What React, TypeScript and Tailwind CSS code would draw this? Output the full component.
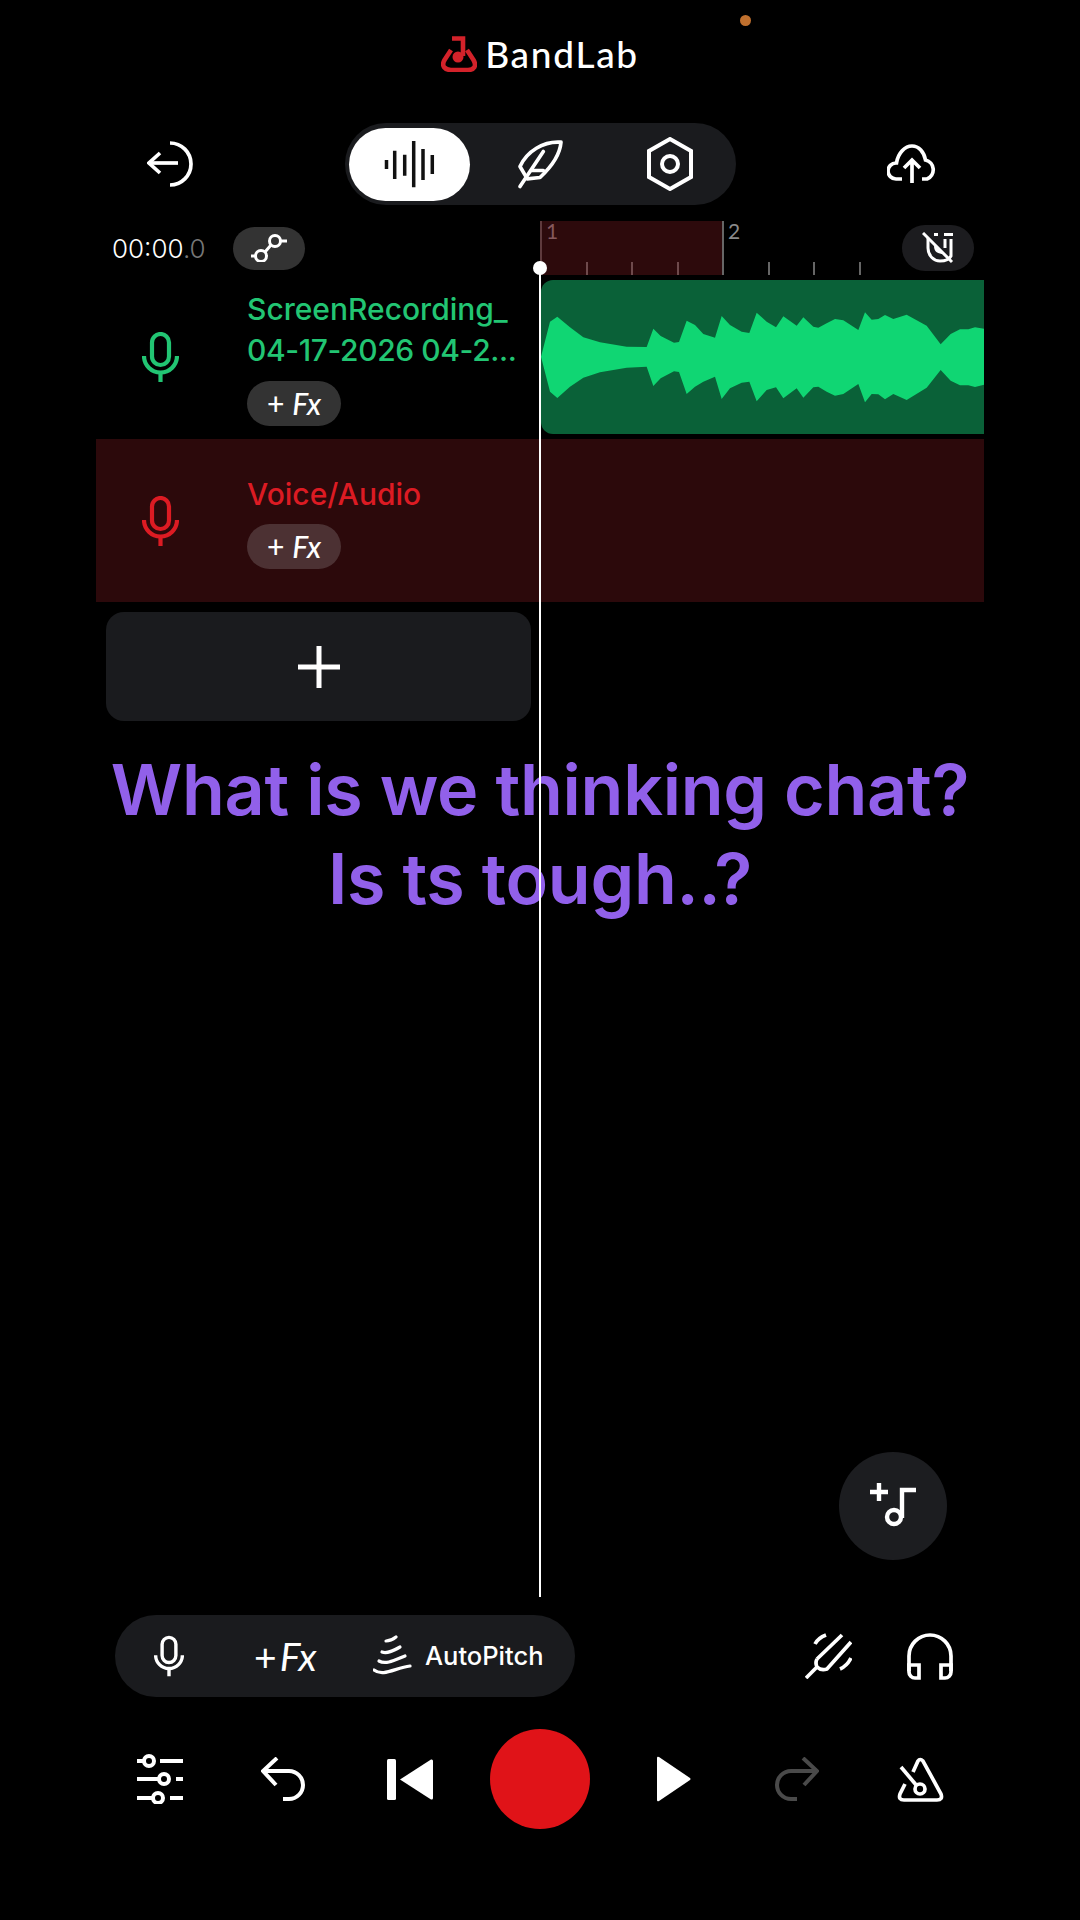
const wavePoints =
  "33,440 60,335 82,320 120,352 160,382 210,397 290,410 350,411 370,356 392,378 432,398 447,396 470,332 495,345 520,372 555,383 575,318 600,345 635,365 658,369 680,308 710,335 738,352 760,319 800,347 820,322 850,350 865,353 890,340 915,327 940,331 985,360 1005,307 1025,329 1045,327 1065,315 1090,327 1130,314 1190,347 1232,403 1262,372 1290,358 1315,358 1335,352 1362,356 1362,524 1335,531 1315,526 1290,526 1262,512 1232,480 1190,533 1130,570 1090,552 1065,568 1045,553 1025,552 1005,577 985,522 940,552 915,557 890,545 865,530 850,532 820,563 800,535 760,565 738,532 710,540 680,574 658,515 635,518 600,535 575,567 555,500 520,515 495,530 470,552 447,486 432,484 392,505 370,528 350,470 290,473 210,487 160,503 120,530 82,564 60,545";

function Mic({ className }: { className: string }) {
  return (
    <svg viewBox="0 0 37 50" className={className} fill="none" stroke="currentColor" strokeWidth="4.2">
      <rect x="10" y="2" width="17" height="31" rx="8.5" />
      <path d="M2 24 a16.5 16.5 0 0 0 33 0" />
      <path d="M18.5 41 V50" />
    </svg>
  );
}

function FxChip({ className }: { className: string }) {
  return (
    <div className={`flex items-center justify-center w-[94px] h-[45px] rounded-full text-white text-[30px] font-medium ${className}`}>
      <span>+</span>
      <span className="italic ml-[8px]">Fx</span>
    </div>
  );
}

function Undo({ className }: { className: string }) {
  return (
    <svg viewBox="0 0 46 44" className={className} fill="none" stroke="currentColor" strokeWidth="4">
      <path d="M16 1 L2 14 L15 28" />
      <path d="M2 14 H28 A14 14 0 0 1 28 42 H22" />
    </svg>
  );
}

export default function App() {
  return (
    <div className="relative flex flex-col w-[1080px] h-[1920px] bg-black overflow-hidden font-[Lato,sans-serif] text-white">
      <div className="absolute left-[740px] top-[15px] w-[11px] h-[11px] rounded-full bg-[#c0702e]" />

      {/* logo */}
      <div className="flex items-center justify-center gap-[8px] h-[110px]">
        <svg viewBox="0 0 36 36" className="w-[36px] h-[36px] mt-[-2px]" fill="none" stroke="#d3222a" strokeWidth="4.6">
          <path d="M10 14 L3.5 24 C0 30 4 34 10 34 H27 C33 34 36 30 32.5 24 L26 14" />
          <path d="M11 2.5 H22 V20" />
          <circle cx="17" cy="21" r="5.5" fill="#d3222a" stroke="none" />
        </svg>
        <span className="text-[37px] font-medium leading-none tracking-[1.7px] mt-[-4px]">BandLab</span>
      </div>

      {/* top toolbar */}
      <div className="flex items-center h-[82px] mt-[13px]">
        <div className="w-[345px] pl-[147px]">
          <svg viewBox="0 0 46 46" className="w-[46px] h-[46px]" fill="none" stroke="white" strokeWidth="3.7">
            <path d="M2 22 H31" />
            <path d="M13 12 L2 22 L13 32" />
            <path d="M23 2 A21 21 0 0 1 23 44" />
          </svg>
        </div>
        <div className="flex items-center w-[391px] h-[82px] rounded-full bg-[#1a1b1e] pl-[4px]">
          <div className="flex items-center justify-center w-[121px] h-[73px] rounded-full bg-white">
            <svg viewBox="0 0 52 48" className="w-[52px] h-[48px]" stroke="#111" strokeWidth="3.5">
              <path d="M2.5 20 V29 M10.7 10.7 V39 M20.7 14.7 V35.7 M29.7 1 V47.3 M39 9 V40 M48.3 15 V34" />
            </svg>
          </div>
          <svg viewBox="555 110 150 155" className="w-[50px] h-[52px] ml-[45px]" fill="none" stroke="white" strokeWidth="11" strokeLinejoin="round" strokeLinecap="round">
            <path d="M693 122 C640 118 590 150 570 195 L592 232 L630 228 C660 200 690 160 693 122 Z" />
            <path d="M570 255 L640 150" />
            <path d="M605 207 L640 207" />
          </svg>
          <svg viewBox="0 0 46 54" className="w-[46px] h-[54px] ml-[82px]" fill="none" stroke="white" strokeWidth="4">
            <path d="M23 2 L44 14 V40 L23 52 L2 40 V14 Z" />
            <circle cx="23" cy="27" r="8" />
          </svg>
        </div>
        <div className="pl-[151px]">
          <svg viewBox="0 0 50 40" className="w-[50px] h-[40px]" fill="none" stroke="white" strokeWidth="3.7">
            <path d="M15 35 H9 A8 8 0 0 1 9 19 H9.5 C11 9 18 2 25 2 C32 2 37 8 38.5 16 A10 10 0 0 1 40 35 H35" />
            <path d="M25 39 V17 M17 24 L25 16 L33 24" />
          </svg>
        </div>
      </div>

      {/* ruler row */}
      <div className="relative flex h-[54px] mt-[16px] mx-[96px]">
        <div className="flex items-center w-[444px] pl-[16px]">
          <span className="w-[121px] text-[26px] font-[Inter,sans-serif] font-light">
            00:00<span className="text-[#777]">.0</span>
          </span>
          <div className="flex items-center justify-center w-[72px] h-[43px] rounded-full bg-[#333]">
            <svg viewBox="0 0 40 28" className="w-[40px] h-[28px]" fill="none" stroke="white" strokeWidth="3">
              <circle cx="12" cy="22" r="5.5" />
              <circle cx="26" cy="7" r="5.5" />
              <path d="M2 22 H6.5 M31.5 7 H38 M16 18 L22 11" />
            </svg>
          </div>
        </div>
        <div className="flex flex-1">
          {[0, 1].map((bar) => (
            <div key={bar} className={`flex w-[182px] shrink-0 border-l-2 ${bar === 0 ? "bg-[#2d0a0c] border-[#5e3a3d]" : "border-[#666]"}`}>
              {[0, 1, 2, 3].map((beat) => (
                <div key={beat} className="relative w-[45.5px] shrink-0">
                  {beat === 0 ? (
                    <span className={`block pl-[4px] text-[21px] leading-[20px] ${bar === 0 ? "text-[#85585c]" : "text-[#8a8a8a]"}`}>{bar + 1}</span>
                  ) : (
                    <div className={`absolute -left-[2px] bottom-0 w-[2px] h-[13px] ${bar === 0 ? "bg-[#6e4a4c]" : "bg-[#666]"}`} />
                  )}
                </div>
              ))}
            </div>
          ))}
        </div>
        <div className="absolute right-[10px] top-[4px] flex items-center justify-center w-[72px] h-[46px] rounded-full bg-[#1c1c1f]">
          <svg viewBox="0 0 32 32" className="w-[32px] h-[32px]" fill="none" stroke="white" strokeWidth="3">
            <path d="M1 1 L30 30" />
            <path d="M6 6 V16 C6 24 12 29 18 29 C22 29 27 28 29 24 V7 M23 7 V16 M22 2.5 H31 M12 2.5 H16" />
            <path d="M12 14 C12 20 16 22 22 22 C18 18 16 14 12 14 Z" fill="white" stroke="none" />
          </svg>
        </div>
      </div>

      {/* track 1 */}
      <div className="flex h-[154px] mt-[5px] mx-[96px]">
        <div className="flex w-[445px]">
          <div className="flex items-center w-[151px] pl-[46px]">
            <Mic className="w-[37px] h-[50px] text-[#22c573]" />
          </div>
          <div className="pt-[9px]">
            <div className="text-[30px] leading-[41px] font-[Inter,sans-serif] font-medium text-[#22c573] whitespace-nowrap">
              <div>ScreenRecording_</div>
              <div className="tracking-[-0.4px]">04-17-2026 04-2...</div>
            </div>
            <FxChip className="mt-[10px] bg-[#333]" />
          </div>
        </div>
        <div className="flex-1 rounded-l-[12px] overflow-hidden bg-[#0a6138]">
          <svg viewBox="33 210 1329 462" preserveAspectRatio="none" className="w-full h-full">
            <polygon points={wavePoints} fill="#10d673" />
          </svg>
        </div>
      </div>

      {/* track 2 */}
      <div className="flex h-[163px] mt-[5px] mx-[96px] bg-[#2c090b]">
        <div className="flex items-center w-[151px] pl-[46px]">
          <Mic className="w-[37px] h-[50px] text-[#dc1b23]" />
        </div>
        <div className="pt-[35px]">
          <div className="text-[30px] leading-[41px] font-[Inter,sans-serif] font-medium text-[#dc1b23]">Voice/Audio</div>
          <FxChip className="mt-[9px] bg-[#4c3133]" />
        </div>
      </div>

      {/* add track */}
      <div className="flex items-center justify-center w-[425px] h-[109px] mt-[10px] ml-[106px] rounded-[18px] bg-[#1a1b1e]">
        <svg viewBox="0 0 42 42" className="w-[42px] h-[42px]" stroke="white" strokeWidth="5">
          <path d="M21 0 V42 M0 21 H42" />
        </svg>
      </div>

      {/* caption */}
      <div className="mt-[24px] text-center font-[Inter,sans-serif] font-semibold text-[70px] leading-[89px] tracking-[-0.3px] text-[#9160ea]">
        What is we thinking chat?
        <br />
        Is ts tough..?
      </div>

      {/* add instrument */}
      <div className="mt-auto ml-[839px] flex items-center justify-center w-[108px] h-[108px] rounded-full bg-[#1c1d20]">
        <svg viewBox="0 0 108 108" className="w-[108px] h-[108px]" fill="none" stroke="white" strokeWidth="4.4">
          <path d="M40 31 V49 M31 40 H49" />
          <path d="M63 66 V38 H77" />
          <circle cx="55" cy="65" r="7" />
        </svg>
      </div>

      {/* track tools */}
      <div className="flex items-center h-[82px] mt-[55px] pl-[115px]">
        <div className="flex items-center w-[460px] h-[82px] rounded-full bg-[#1a1b1e] pl-[39px]">
          <Mic className="w-[30px] h-[42px] text-white" />
          <div className="flex items-center w-[64px] ml-[70px] text-[39px] leading-none whitespace-nowrap">
            <span>+</span>
            <span className="italic ml-[3px]">Fx</span>
          </div>
          <svg viewBox="0 0 40 42" className="w-[40px] h-[42px] ml-[55px]" fill="none" stroke="white" strokeWidth="3.2" strokeLinecap="round">
            <path d="M13 6 Q18 6 23 2" />
            <path d="M9 17 C14 19 20 16 27 12" />
            <path d="M6 26 C13 30 22 25 32 21" />
            <path d="M1 35 C10 42 22 33 37 31" />
          </svg>
          <span className="ml-[12px] text-[25.5px] font-[Inter,sans-serif] font-medium whitespace-nowrap">AutoPitch</span>
        </div>
        <svg viewBox="0 0 47 46" className="w-[47px] h-[46px] ml-[230px]" fill="none" stroke="white" strokeWidth="3.7">
          <path d="M1 45 L12 34" />
          <path d="M12 26 L37 2 M46 9 L22 36 Q16 38 12 34 Q10 30 12 26" />
          <path d="M10 11 Q13 5 21 2 M35 36 Q42 33 46 25" />
        </svg>
        <svg viewBox="0 0 46 47" className="w-[46px] h-[47px] ml-[55px]" fill="none" stroke="white" strokeWidth="3.7">
          <path d="M2 38 V23 a21 21 0 0 1 42 0 V38" />
          <path d="M2 32 H12 V45 H8 a6 6 0 0 1 -6 -6 Z" />
          <path d="M44 32 H34 V45 H38 a6 6 0 0 0 6 -6 Z" />
        </svg>
      </div>

      {/* transport */}
      <div className="flex items-center h-[100px] mt-[32px] mb-[91px] pl-[137px]">
        <svg viewBox="0 0 46 50" className="w-[46px] h-[50px]" fill="none" stroke="white" strokeWidth="4">
          <path d="M0 7 H7 M23 7 H46 M0 25 H22 M39 25 H46 M0 44 H15 M33 44 H46" />
          <circle cx="12" cy="7" r="5" />
          <circle cx="27" cy="25" r="5" />
          <circle cx="21" cy="44" r="5" />
        </svg>
        <Undo className="w-[46px] h-[44px] ml-[78px] text-white" />
        <svg viewBox="0 0 46 41" className="w-[46px] h-[41px] ml-[80px]" fill="white">
          <rect width="9" height="41" rx="1.5" />
          <path d="M13 20.5 L44 0.5 Q46 0 46 2 V39 Q46 41 44 40.5 Z" />
        </svg>
        <div className="w-[100px] h-[100px] ml-[57px] rounded-full bg-[#e01318]" />
        <svg viewBox="0 0 34 46" className="w-[34px] h-[46px] ml-[67px]" fill="white">
          <path d="M0 2 Q0 0 2 1 L33 22 Q34 23 33 24 L2 45 Q0 46 0 44 Z" />
        </svg>
        <Undo className="w-[46px] h-[44px] ml-[82px] -scale-x-100 text-[#4a4a4a]" />
        <svg viewBox="0 0 47 45" className="w-[47px] h-[45px] ml-[78px]" fill="none" stroke="white" strokeWidth="3.7">
          <path d="M16 15 L21 4 Q23 1 26 4 L44 37 Q46 43 40 43 H7 Q1 43 3 37 L8 27" />
          <path d="M4 10 L20 29" />
          <circle cx="23" cy="32" r="5" />
        </svg>
      </div>

      {/* playhead */}
      <div className="absolute left-[539px] top-[268px] w-[2px] h-[1329px] bg-white" />
      <div className="absolute left-[533px] top-[261px] w-[14px] h-[14px] rounded-full bg-white" />
    </div>
  );
}
